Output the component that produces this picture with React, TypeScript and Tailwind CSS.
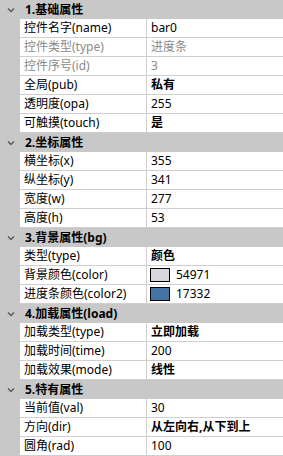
import React from 'react';

type Row = {
  name: string;
  value?: string;
  bold?: boolean;
  disabled?: boolean;
  color?: string;
};

type Group = {
  title: string;
  rows: Row[];
};

const groups: Group[] = [
  {
    title: '1.基础属性',
    rows: [
      { name: '控件名字(name)', value: 'bar0' },
      { name: '控件类型(type)', value: '进度条', disabled: true },
      { name: '控件序号(id)', value: '3', disabled: true },
      { name: '全局(pub)', value: '私有', bold: true },
      { name: '透明度(opa)', value: '255' },
      { name: '可触摸(touch)', value: '是', bold: true },
    ],
  },
  {
    title: '2.坐标属性',
    rows: [
      { name: '横坐标(x)', value: '355' },
      { name: '纵坐标(y)', value: '341' },
      { name: '宽度(w)', value: '277' },
      { name: '高度(h)', value: '53' },
    ],
  },
  {
    title: '3.背景属性(bg)',
    rows: [
      { name: '类型(type)', value: '颜色', bold: true },
      { name: '背景颜色(color)', value: '54971', color: '#d6d6de' },
      { name: '进度条颜色(color2)', value: '17332', color: '#4275a5' },
    ],
  },
  {
    title: '4.加载属性(load)',
    rows: [
      { name: '加载类型(type)', value: '立即加载', bold: true },
      { name: '加载时间(time)', value: '200' },
      { name: '加载效果(mode)', value: '线性', bold: true },
    ],
  },
  {
    title: '5.特有属性',
    rows: [
      { name: '当前值(val)', value: '30' },
      { name: '方向(dir)', value: '从左向右,从下到上', bold: true },
      { name: '圆角(rad)', value: '100' },
    ],
  },
];

const Chevron = () => (
  <svg width="8" height="6" viewBox="0 0 8 6" className="shrink-0">
    <polyline points="1,1.5 4,4.5 7,1.5" fill="none" stroke="#5a5a5a" strokeWidth="1.4" />
  </svg>
);

const PropertyRow: React.FC<{ row: Row }> = ({ row }) => {
  const tone = row.disabled ? 'text-[#8a8a8a]' : 'text-black';
  return (
    <div className="flex h-[19px]">
      <div className="w-[20px] shrink-0 bg-[#c8c8c8]" />
      <div className={`flex w-[127px] shrink-0 items-center border-b border-r border-[#cfcfcf] pl-[4px] ${tone}`}>
        {row.name}
      </div>
      <div className={`flex flex-1 items-center border-b border-[#cfcfcf] ${tone} ${row.bold ? 'font-bold' : ''}`}>
        {row.color ? (
          <>
            <span className="ml-[3px] h-[14px] w-[20px] border border-black" style={{ backgroundColor: row.color }} />
            <span className="ml-[6px]">{row.value}</span>
          </>
        ) : (
          <span className="pl-[4px]">{row.value}</span>
        )}
      </div>
    </div>
  );
};

export default function App() {
  return (
    <div
      className="w-[283px] h-[456px] overflow-hidden bg-white text-[12px] leading-none"
      style={{ fontFamily: '"Noto Sans", "Noto Sans CJK SC", sans-serif' }}
    >
      {groups.map((g) => (
        <div key={g.title}>
          <div className="flex h-[19px] items-center bg-[#c8c8c8]">
            <div className="flex w-[20px] shrink-0 justify-center pl-[1px]">
              <Chevron />
            </div>
            <span className="pl-[5px] font-bold text-black">{g.title}</span>
          </div>
          {g.rows.map((r) => (
            <PropertyRow key={r.name} row={r} />
          ))}
        </div>
      ))}
    </div>
  );
}
